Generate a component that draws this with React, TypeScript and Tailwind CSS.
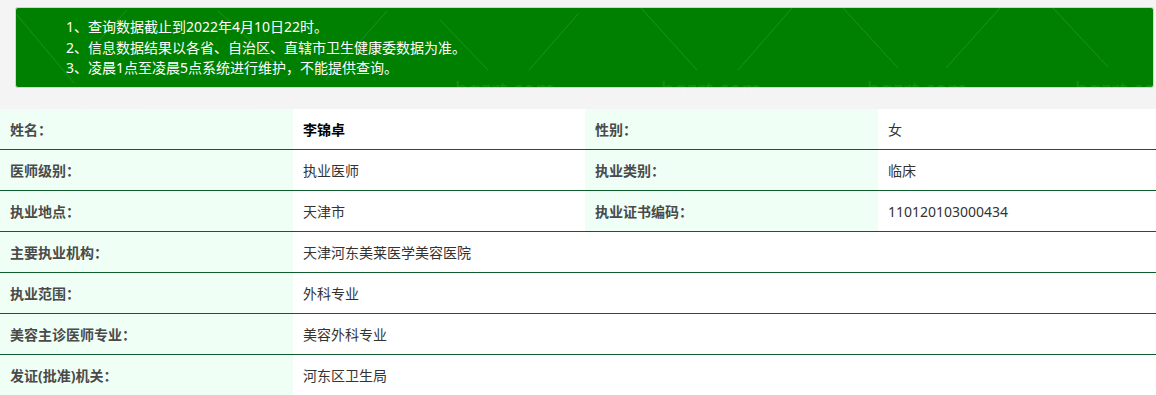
import React from "react";

const notices = [
  "1、查询数据截止到2022年4月10日22时。",
  "2、信息数据结果以各省、自治区、直辖市卫生健康委数据为准。",
  "3、凌晨1点至凌晨5点系统进行维护，不能提供查询。",
];

type Row =
  | { kind: "pair"; l1: string; v1: string; l2: string; v2: string; strong?: boolean }
  | { kind: "wide"; l1: string; v1: string };

const rows: Row[] = [
  { kind: "pair", l1: "姓名：", v1: "李锦卓", l2: "性别：", v2: "女", strong: true },
  { kind: "pair", l1: "医师级别：", v1: "执业医师", l2: "执业类别：", v2: "临床" },
  { kind: "pair", l1: "执业地点：", v1: "天津市", l2: "执业证书编码：", v2: "110120103000434" },
  { kind: "wide", l1: "主要执业机构：", v1: "天津河东美莱医学美容医院" },
  { kind: "wide", l1: "执业范围：", v1: "外科专业" },
  { kind: "wide", l1: "美容主诊医师专业：", v1: "美容外科专业" },
  { kind: "wide", l1: "发证(批准)机关：", v1: "河东区卫生局" },
];

// faint screenshot watermark lines / text
const marks: [number, number, number, number][] = [
  [17, 15, 74, 83],
  [127, 10, 90, 50],
  [218, 11, 281, 68],
  [387, 11, 326, 80],
  [440, 20, 488, 70],
  [579, 13, 529, 70],
  [641, 8, 697, 70],
  [792, 8, 738, 70],
  [843, 8, 898, 68],
  [1000, 8, 946, 68],
  [1053, 8, 1108, 67],
];
const markTexts: [number, number][] = [
  [455, 97],
  [661, 97],
  [867, 97],
  [1075, 97],
  [40, 105],
  [258, 105],
];

function Label({ text }: { text: string }) {
  return (
    <div className="w-[293px] shrink-0 h-full flex items-center pl-[10px] bg-[#effff6] text-[14px] font-bold text-[#4a4a4a]">
      {text}
    </div>
  );
}

export default function App() {
  return (
    <div className="relative w-[1156px] h-[395px] overflow-hidden bg-white font-['Noto_Sans','Noto_Sans_CJK_SC',sans-serif]">
      {/* Notice */}
      <div className="bg-[#f4f4f4] pt-[7px] pb-[21px] pl-[15px] pr-[2px]">
        <div className="h-[81px] border border-[#e6cccc] rounded-[3px] bg-[#008000] pl-[50px] pt-[9px] text-white text-[14px] leading-[20.5px]">
          {notices.map((n) => (
            <div key={n}>{n}</div>
          ))}
        </div>
      </div>

      {/* Detail table */}
      <div>
        {rows.map((r, i) => (
          <div key={i} className="flex h-[41px] border-b border-[#0d5e2e]">
            <Label text={r.l1} />
            {r.kind === "pair" ? (
              <>
                <div
                  className={`w-[292px] shrink-0 h-full flex items-center pl-[10px] text-[14px] ${
                    r.strong ? "font-bold text-black" : "text-[#333]"
                  }`}
                >
                  {r.v1}
                </div>
                <Label text={r.l2} />
                <div className="flex-1 h-full flex items-center pl-[10px] text-[14px] text-[#333]">
                  {r.v2}
                </div>
              </>
            ) : (
              <div className="flex-1 h-full flex items-center pl-[10px] text-[14px] text-[#333]">
                {r.v1}
              </div>
            )}
          </div>
        ))}
      </div>

      {/* watermark overlay */}
      <svg
        className="absolute inset-0 pointer-events-none"
        width="1156"
        height="395"
        viewBox="0 0 1156 395"
      >
        {marks.map(([x1, y1, x2, y2], i) => (
          <line key={i} x1={x1} y1={y1} x2={x2} y2={y2} stroke="white" strokeOpacity="0.12" strokeWidth="1" />
        ))}
        {markTexts.map(([x, y], i) => (
          <text key={i} x={x} y={y} fill="white" fillOpacity="0.1" fontSize="21" fontFamily="Noto Sans, sans-serif">
            hgzrt.com
          </text>
        ))}
      </svg>
    </div>
  );
}
